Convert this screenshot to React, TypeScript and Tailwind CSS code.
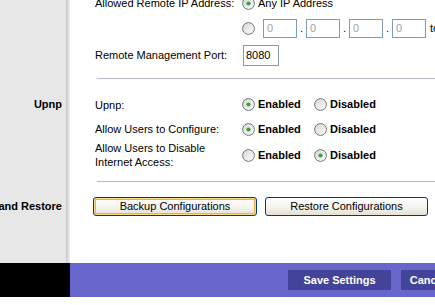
import type { ReactNode } from 'react'

function Radio({ on }: { on?: boolean }) {
  return (
    <svg width="13" height="13" viewBox="0 0 13 13" className="shrink-0">
      <defs>
        <linearGradient id="radioFill" x1="0" y1="0" x2="1" y2="1">
          <stop offset="0" stopColor="#d6d6cf" />
          <stop offset="1" stopColor="#ffffff" />
        </linearGradient>
      </defs>
      <circle cx="6.5" cy="6.5" r="5.9" fill="url(#radioFill)" stroke="#6b7786" strokeWidth="1" />
      {on && <circle cx="6.5" cy="6.5" r="2.1" fill="#2fa834" />}
    </svg>
  )
}

function Choice({ on, label, bold, className = '' }: { on?: boolean; label: string; bold?: boolean; className?: string }) {
  return (
    <div className={`flex items-center gap-[3px] ${className}`}>
      <Radio on={on} />
      <span className={bold ? 'font-bold' : ''}>{label}</span>
    </div>
  )
}

function EnableRow({ enabled }: { enabled: boolean }) {
  return (
    <div className="flex items-center">
      <Choice on={enabled} label="Enabled" bold className="w-[72px]" />
      <Choice on={!enabled} label="Disabled" bold />
    </div>
  )
}

function Row({ side, label, h, children }: { side?: string; label?: ReactNode; h: string; children?: ReactNode }) {
  return (
    <div className={`flex ${h}`}>
      <div className="flex w-[66px] shrink-0 items-center justify-end bg-[#e7e7e7] pr-[4px] font-bold whitespace-nowrap">
        {side}
      </div>
      <div className="w-[4px] shrink-0 bg-[linear-gradient(to_right,#c6c6c6,#f2f2f2)]" />
      <div className="flex flex-1 items-center pl-[25px]">
        <div className="w-[147px] shrink-0 leading-[14px]">{label}</div>
        {children}
      </div>
    </div>
  )
}

function Divider({ h, pt }: { h: string; pt: string }) {
  return (
    <div className={`flex ${h}`}>
      <div className="w-[66px] shrink-0 bg-[#e7e7e7]" />
      <div className="w-[4px] shrink-0 bg-[linear-gradient(to_right,#c6c6c6,#f2f2f2)]" />
      <div className={`flex-1 pl-[27px] ${pt}`}>
        <div className="h-px bg-[#b6b6cc]" />
      </div>
    </div>
  )
}

function IpBox() {
  return (
    <div className="flex h-[19px] w-[34px] items-center border border-[#7f9db9] bg-white pl-[3px] text-[#a3a3a3]">0</div>
  )
}

function XpButton({ label, focus }: { label: string; focus?: boolean }) {
  return (
    <button
      className={`h-[19px] w-full rounded-[3px] border border-[#003c74] bg-[linear-gradient(to_bottom,#ffffff,#f3f2ec_60%,#e3e0d2)] text-center text-black ${
        focus ? 'shadow-[inset_0_0_0_1px_#fbd889,inset_0_0_0_2px_#f0b04a]' : ''
      }`}
    >
      {label}
    </button>
  )
}

export default function App() {
  return (
    <div className="h-[305px] w-[435px] overflow-hidden bg-white text-[11px] text-black [font-family:'Liberation_Sans',Arial,sans-serif]">
      <div className="-mt-[9px]">
        <Row h="h-[24px]" label="Allowed Remote IP Address:">
          <Choice on label="Any IP Address" />
        </Row>
        <Row h="h-[26px]">
          <div className="flex items-center">
            <Radio />
            <div className="ml-[8px] flex items-center">
              <IpBox />
              <span className="w-[9px] text-center">.</span>
              <IpBox />
              <span className="w-[9px] text-center">.</span>
              <IpBox />
              <span className="w-[9px] text-center">.</span>
              <IpBox />
              <span className="ml-[4px] whitespace-nowrap">to</span>
            </div>
          </div>
        </Row>
        <Row h="h-[28px]" label="Remote Management Port:">
          <div className="ml-[1px] flex h-[21px] w-[36px] items-center border border-[#7f9db9] bg-white pl-[2px]">8080</div>
        </Row>
        <Divider h="h-[23px]" pt="pt-[9px]" />
        <Row h="h-[25px]" side="Upnp" label="Upnp:">
          <EnableRow enabled />
        </Row>
        <Row h="h-[24px]" label="Allow Users to Configure:">
          <EnableRow enabled />
        </Row>
        <Row
          h="h-[28px]"
          label={
            <>
              Allow Users to Disable
              <br />
              Internet Access:
            </>
          }
        >
          <EnableRow enabled={false} />
        </Row>
        <Divider h="h-[26px]" pt="pt-[12px]" />
        <div className="flex h-[23px]">
          <div className="flex w-[66px] shrink-0 items-center justify-end bg-[#e7e7e7] pr-[4px] font-bold whitespace-nowrap">
            Backup and Restore
          </div>
          <div className="w-[4px] shrink-0 bg-[linear-gradient(to_right,#c6c6c6,#f2f2f2)]" />
          <div className="flex flex-1 items-center gap-[8px] pl-[23px]">
            <div className="w-[164px] shrink-0">
              <XpButton label="Backup Configurations" focus />
            </div>
            <div className="w-[163px] shrink-0">
              <XpButton label="Restore Configurations" />
            </div>
          </div>
        </div>
        <Divider h="h-[45px]" pt="pt-[45px]" />
        <div className="flex h-[34px]">
          <div className="w-[70px] shrink-0 bg-black" />
          <div className="flex flex-1 items-center gap-[10px] bg-[#6666cc] pl-[218px]">
            <button className="h-[20px] w-[103px] shrink-0 bg-[#434399] font-bold text-white">Save Settings</button>
            <button className="h-[20px] w-[103px] shrink-0 bg-[#434399] font-bold text-white">Cancel Changes</button>
          </div>
        </div>
      </div>
    </div>
  )
}
